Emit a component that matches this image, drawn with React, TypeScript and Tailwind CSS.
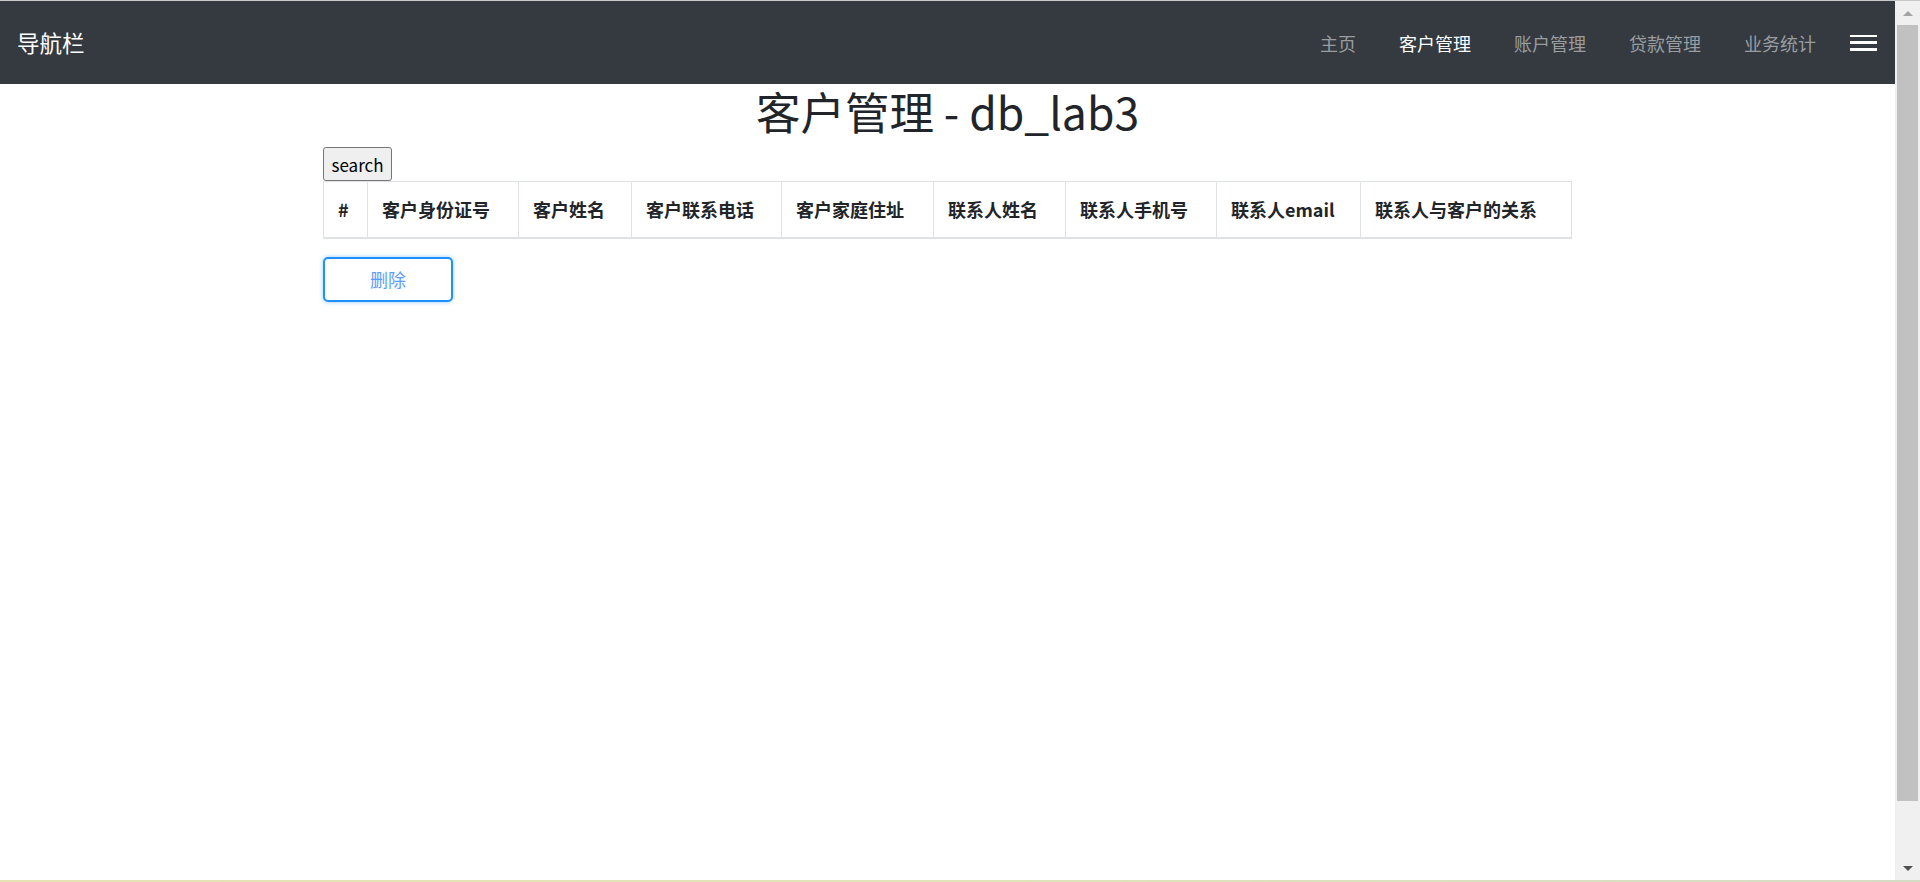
import React from "react";

const links = ["主页", "客户管理", "账户管理", "贷款管理", "业务统计"];

const columns: { label: string; w: string }[] = [
  { label: "#", w: "w-[44px]" },
  { label: "客户身份证号", w: "w-[151px]" },
  { label: "客户姓名", w: "w-[113px]" },
  { label: "客户联系电话", w: "w-[150px]" },
  { label: "客户家庭住址", w: "w-[152px]" },
  { label: "联系人姓名", w: "w-[132px]" },
  { label: "联系人手机号", w: "w-[151px]" },
  { label: "联系人email", w: "w-[144px]" },
  { label: "联系人与客户的关系", w: "w-[211px]" },
];

function Navbar() {
  return (
    <nav className="flex h-[83px] items-center bg-[#343a40] pl-[17px] pr-[18px]">
      <a className="text-[22.5px] leading-none text-white">导航栏</a>
      <div className="ml-auto flex items-center gap-[43px]">
        {links.map((l) => (
          <a
            key={l}
            className={
              "text-[18px] leading-none " +
              (l === "客户管理" ? "text-white" : "text-[#9a9da0]")
            }
          >
            {l}
          </a>
        ))}
      </div>
      <button className="ml-[34px] flex h-[16px] w-[27px] flex-col justify-between">
        <span className="h-[2.5px] w-full bg-white" />
        <span className="h-[2.5px] w-full bg-white" />
        <span className="h-[2.5px] w-full bg-white" />
      </button>
    </nav>
  );
}

function Scrollbar() {
  return (
    <div className="flex w-[25px] shrink-0 flex-col items-center bg-[#f0f0f0]">
      <div className="flex h-[24px] items-center justify-center">
        <div className="h-0 w-0 border-x-[5px] border-b-[5px] border-x-transparent border-b-[#a3a3a3]" />
      </div>
      <div className="h-[776px] w-[21px] bg-[#c1c1c1]" />
      <div className="flex flex-1 items-end justify-center pb-[9px]">
        <div className="h-0 w-0 border-x-[5px] border-t-[5px] border-x-transparent border-t-[#505050]" />
      </div>
    </div>
  );
}

export default function App() {
  return (
    <div className="flex h-[882px] flex-col overflow-hidden bg-white font-['Noto_Sans_CJK_SC','Open_Sans',sans-serif] text-[#212529]">
      <div className="h-[1px] bg-[#c8c8c8]" />
      <div className="flex min-h-0 flex-1">
        <div className="min-w-0 flex-1">
          <Navbar />
          <div className="mx-auto w-[1249px]">
            <h1 className="mb-[9px] text-center text-[44.5px] font-normal leading-[54px]">
              客户管理 - db_lab3
            </h1>
            <button className="block h-[34px] w-[69px] rounded-[3px] border border-[#767676] bg-[#efefef] text-[17px] leading-none text-black">
              search
            </button>
            <table className="table-fixed border-collapse">
              <thead>
                <tr>
                  {columns.map((c) => (
                    <th
                      key={c.label}
                      className={
                        c.w +
                        " h-[56px] border border-b-2 border-[#dee2e6] px-[14px] text-left align-middle text-[18px] font-bold leading-[27px]"
                      }
                    >
                      {c.label}
                    </th>
                  ))}
                </tr>
              </thead>
              <tbody />
            </table>
            <button className="mt-[18px] h-[45px] w-[130px] rounded-[5px] border-2 border-[#1e90ff] bg-white text-[18px] text-[#5c9dff] shadow-[0_0_4px_rgba(24,144,255,0.45)]">
              删除
            </button>
          </div>
        </div>
        <Scrollbar />
      </div>
      <div className="h-[2px] bg-gradient-to-r from-[#e6e2b4] via-[#e0e4b8] to-[#d5dcc4]" />
    </div>
  );
}
